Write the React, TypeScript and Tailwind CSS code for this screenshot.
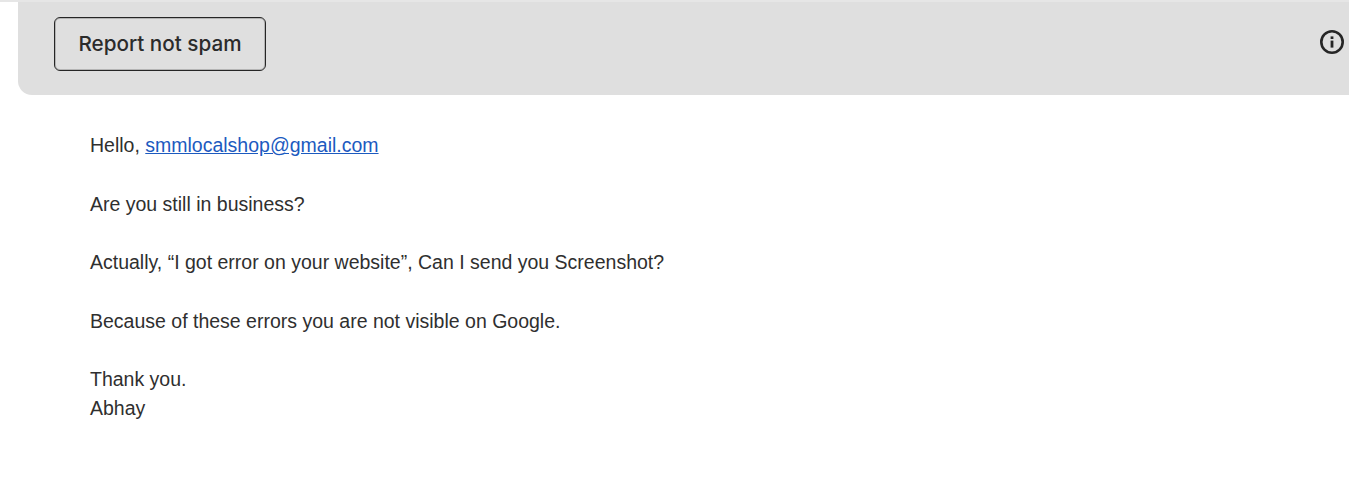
export default function App() {
  return (
    <div className="h-[495px] w-[1349px] overflow-hidden bg-white font-['Liberation_Sans',Arial,sans-serif]">
      {/* spam banner */}
      <div className="border-t-2 border-[#e6e6e6] pl-[18px]">
        <div className="flex h-[93px] items-start justify-between rounded-bl-[14px] bg-[#dfdfdf] pl-9 pr-[5px]">
          <button className="mt-[15px] h-[54px] w-[212px] rounded-[6px] border border-[#262626] shadow-[inset_0_0_0_1px_#b4b4b4] font-['Inter',sans-serif] text-[20.7px] font-[450] leading-[50px] text-[#2b2b2b]">
            Report not spam
          </button>
          <svg className="mt-[28px] h-[24px] w-[24px]" viewBox="0 0 24 24" fill="none">
            <circle cx="12" cy="12" r="10.7" stroke="#262626" strokeWidth="2.6" />
            <rect x="10.6" y="10.6" width="2.8" height="7" fill="#262626" />
            <rect x="10.6" y="6.4" width="2.8" height="2.6" fill="#262626" />
          </svg>
        </div>
      </div>
      {/* message body */}
      <div className="pl-[90px] pt-[36.4px] text-[19.5px] leading-[29.2px] text-[#2f2f2f]">
        <p>
          Hello, <a href="#" className="text-[#1c5abf] underline">smmlocalshop@gmail.com</a>
        </p>
        <br />
        <p>Are you still in business?</p>
        <br />
        <p>Actually, “I got error on your website”, Can I send you Screenshot?</p>
        <br />
        <p>Because of these errors you are not visible on Google.</p>
        <br />
        <p>Thank you.</p>
        <p>Abhay</p>
      </div>
    </div>
  )
}
